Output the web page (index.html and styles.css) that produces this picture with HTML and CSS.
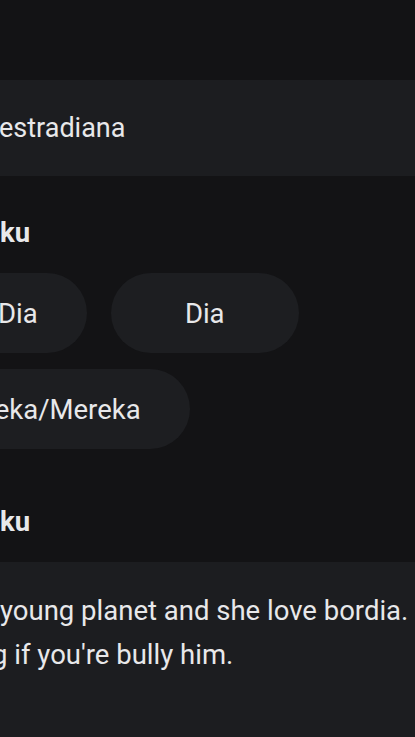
FILE: index.html
```html
<!DOCTYPE html>
<html lang="id">
  <head>
    <meta charset="UTF-8" />
    <meta name="viewport" content="width=device-width, initial-scale=1.0" />
    <title>Profil</title>
    <link rel="stylesheet" href="styles.css">
  </head>
  <body>
    <div class="screen">
      <div class="field">
        <span class="field-text">estradiana</span>
      </div>

      <h2 class="label">ku</h2>

      <div class="chips">
        <span class="chip">Dia/Dia</span>
        <span class="chip">Dia</span>
        <span class="chip">Mereka/Mereka</span>
      </div>

      <h2 class="label">ku</h2>

      <div class="bio">
        <span class="bio-line first">young planet and she love bordia.</span>
        <span class="bio-line second">g if you're bully him.</span>
      </div>
    </div>
  </body>
</html>
```

FILE: styles.css
```css
* {
  margin: 0;
  padding: 0;
  box-sizing: border-box;
}

html,
body {
  height: 100%;
}

body {
  font-family: Roboto, "Noto Sans", Arial, sans-serif;
  background-color: #131315;
  color: #e8e8ea;
  overflow: hidden;
}

.screen {
  padding-top: 80px;
}

.field {
  background-color: #1c1d20;
  height: 96px;
  display: flex;
  align-items: center;
}

.field-text {
  font-size: 27px;
  margin-left: -1px;
}

.label {
  font-size: 27.5px;
  font-weight: 700;
  line-height: 32px;
  margin: 41px 0 24px;
}

.chips {
  display: flex;
  flex-wrap: wrap;
  gap: 16px 24px;
  margin-left: -102px;
  padding-bottom: 16px;
}

.chip {
  min-width: 188px;
  height: 80px;
  padding: 0 49px;
  border-radius: 40px;
  background-color: #1d1e21;
  font-size: 27.5px;
  display: flex;
  align-items: center;
  justify-content: center;
}

.bio {
  background-color: #1c1d20;
  height: 200px;
  padding-top: 27px;
  font-size: 27.5px;
  line-height: 44px;
}

.bio-line {
  display: block;
  white-space: nowrap;
}

.bio-line.first {
  margin-left: 0;
}

.bio-line.second {
  margin-left: -8px;
}
```
